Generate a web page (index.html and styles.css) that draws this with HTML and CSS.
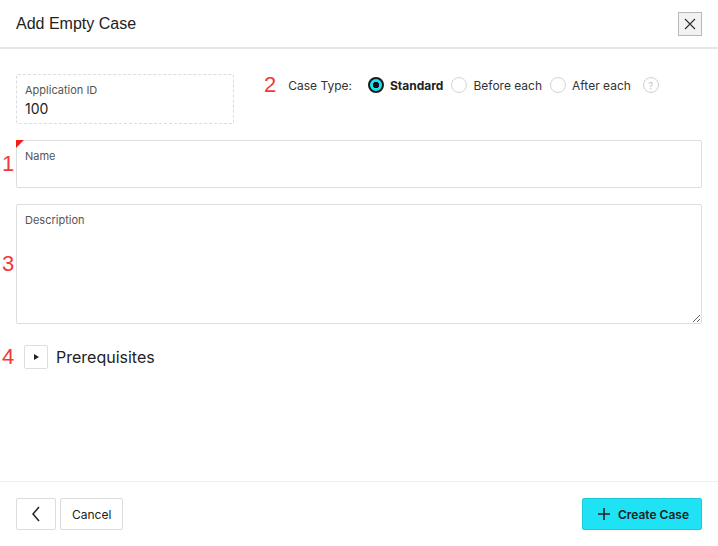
FILE: index.html
```html
<!DOCTYPE html>
<html lang="en">
<head>
  <meta charset="UTF-8">
  <meta name="viewport" content="width=device-width, initial-scale=1.0">
  <title>Add Empty Case</title>
  <link rel="stylesheet" href="styles.css">
</head>
<body>
  <div class="modal">
    <header class="modal-header">
      <h2>Add Empty Case</h2>
      <button class="close-btn" aria-label="Close">
        <svg width="12" height="12" viewBox="0 0 12 12"><path d="M1 1L11 11M11 1L1 11" stroke="#333" stroke-width="1.2" fill="none"/></svg>
      </button>
    </header>

    <section class="modal-body">
      <div class="row top-row">
        <div class="readonly-field">
          <div class="field-label">Application ID</div>
          <div class="field-value">100</div>
        </div>
        <div class="case-type">
          <span class="marker marker-inline">2</span>
          <span class="case-label">Case Type:</span>
          <label class="radio checked"><span class="dot"></span><b>Standard</b></label>
          <label class="radio"><span class="dot"></span>Before each</label>
          <label class="radio"><span class="dot"></span>After each</label>
          <span class="help">?</span>
        </div>
      </div>

      <div class="row">
        <span class="marker">1</span>
        <div class="field required">
          <div class="field-label">Name</div>
          <input type="text" class="field-input">
        </div>
      </div>

      <div class="row">
        <span class="marker">3</span>
        <textarea class="desc" placeholder="Description"></textarea>
      </div>

      <div class="row prereq">
        <span class="marker">4</span>
        <button class="toggle">
          <svg width="8" height="8" viewBox="0 0 8 8"><path d="M2 1L7 4L2 7Z" fill="#222"/></svg>
        </button>
        <span class="prereq-title">Prerequisites</span>
      </div>
    </section>

    <footer class="modal-footer">
      <div class="footer-left">
        <button class="btn back-btn">
          <svg width="10" height="16" viewBox="0 0 10 16"><path d="M8 1L2 8L8 15" stroke="#222" stroke-width="1.5" fill="none"/></svg>
        </button>
        <button class="btn">Cancel</button>
      </div>
      <button class="btn primary">
        <svg width="12" height="12" viewBox="0 0 12 12"><path d="M6 0V12M0 6H12" stroke="#222" stroke-width="1.6" fill="none"/></svg>
        Create Case
      </button>
    </footer>
  </div>
</body>
</html>
```

FILE: styles.css
```css
body {
  margin: 0;
  background: #fff;
  font-family: 'Inter', 'Liberation Sans', sans-serif;
  color: #222;
}
.modal {
  height: 546px;
  display: flex;
  flex-direction: column;
}
.modal-header {
  height: 47px;
  border-bottom: 2px solid #e6e6e6;
  display: flex;
  align-items: center;
  justify-content: space-between;
  padding: 0 16px;
}
.modal-header h2 {
  margin: 0;
  font-family: 'Liberation Sans', sans-serif;
  font-weight: normal;
  font-size: 16px;
  color: #222;
}
.close-btn {
  width: 24px;
  height: 24px;
  padding: 0;
  border: 1px solid #b8b8b8;
  background: #f2f2f2;
  display: flex;
  align-items: center;
  justify-content: center;
}
.modal-body {
  flex: 1;
  padding: 25px 16px 0 16px;
}
.row {
  position: relative;
  display: flex;
  margin-bottom: 16px;
}
.top-row {
  align-items: flex-start;
}
.marker {
  position: absolute;
  left: -14px;
  top: 50%;
  transform: translateY(-50%);
  color: #f23a3a;
  font-family: 'Liberation Sans', sans-serif;
  font-size: 22px;
}
.marker-inline {
  position: static;
  transform: none;
  margin-right: 12px;
}
.readonly-field {
  width: 200px;
  height: 40px;
  border: 1px dashed #dcdcdc;
  border-radius: 2px;
  padding: 4px 8px;
}
.field-label {
  font-size: 11px;
  color: #555;
  margin-top: 4px;
}
.field-value {
  font-size: 14px;
  margin-top: 3px;
}
.case-type {
  display: flex;
  align-items: center;
  margin-left: 30px;
  font-size: 12px;
  height: 22px;
}
.case-label {
  margin-right: 16px;
  color: #333;
}
.radio {
  display: flex;
  align-items: center;
  margin-right: 8px;
  color: #333;
}
.radio .dot {
  width: 14px;
  height: 14px;
  border: 1px solid #d4d4d4;
  border-radius: 50%;
  margin-right: 6px;
  box-sizing: content-box;
}
.radio.checked .dot {
  width: 12px;
  height: 12px;
  border: 2px solid #1a1a1a;
  background: radial-gradient(circle, #111 0 3px, #1fe0f2 3.5px);
}
.radio b {
  font-weight: 700;
  color: #222;
}
.help {
  width: 14px;
  height: 14px;
  border: 1px solid #d0d0d0;
  border-radius: 50%;
  color: #bbb;
  font-size: 9px;
  display: flex;
  align-items: center;
  justify-content: center;
  margin-left: 4px;
}
.field {
  position: relative;
  flex: 1;
  height: 46px;
  border: 1px solid #dedede;
  border-radius: 2px;
  padding: 0 8px;
}
.required::before {
  content: '';
  position: absolute;
  left: -1px;
  top: -1px;
  width: 8px;
  height: 8px;
  background: #f51c1c;
  clip-path: polygon(0 0, 100% 0, 0 100%);
}
.field .field-label {
  margin-top: 8px;
}
.field-input {
  border: none;
  outline: none;
  width: 100%;
  font-size: 14px;
  padding: 2px 0;
  font-family: inherit;
}
.desc {
  flex: 1;
  height: 120px;
  box-sizing: border-box;
  border: 1px solid #dedede;
  border-radius: 2px;
  padding: 8px 8px;
  font-family: inherit;
  font-size: 11px;
  resize: vertical;
  margin: 0;
  outline: none;
}
.desc::placeholder {
  color: #555;
}
.prereq {
  align-items: center;
  margin-top: 21px;
  padding-left: 8px;
}
.toggle {
  width: 24px;
  height: 24px;
  padding: 0;
  border: 1px solid #dedede;
  border-radius: 2px;
  background: #fff;
  display: flex;
  align-items: center;
  justify-content: center;
}
.prereq-title {
  font-size: 16px;
  margin-left: 8px;
  color: #222;
}
.modal-footer {
  border-top: 1px solid #eee;
  padding: 16px;
  display: flex;
  justify-content: space-between;
  align-items: center;
}
.footer-left {
  display: flex;
  gap: 4px;
}
.btn {
  height: 32px;
  border: 1px solid #dcdcdc;
  border-radius: 2px;
  background: #fff;
  font-family: inherit;
  font-size: 12px;
  color: #222;
  padding: 0 11px;
  display: flex;
  align-items: center;
  gap: 8px;
}
.back-btn {
  width: 40px;
  justify-content: center;
  padding: 0;
}
.primary {
  background: #1fe2f4;
  border-color: #1bcbdc;
  font-weight: 600;
  padding: 0 12px 0 15px;
}
```
